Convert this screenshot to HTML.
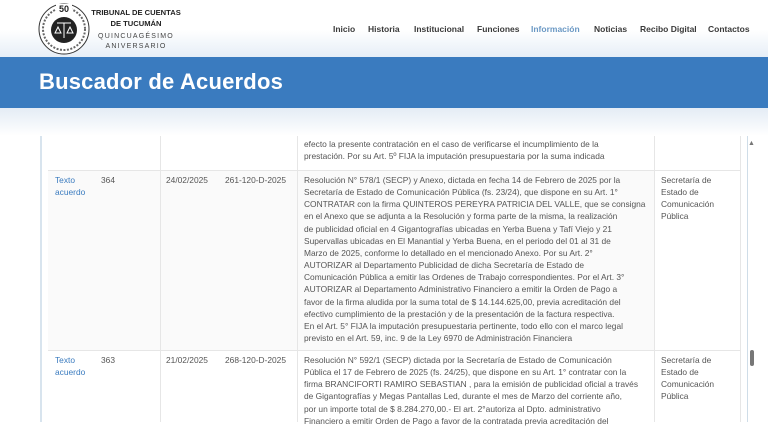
<!DOCTYPE html>
<html><head><meta charset="utf-8"><style>
*{margin:0;padding:0;box-sizing:border-box}
body{width:768px;height:422px;overflow:hidden;background:#fff;font-family:"Liberation Sans",sans-serif;position:relative}
.hdr{position:absolute;left:0;top:0;width:768px;height:57px;background:linear-gradient(#fff 0,#fff 30px,#e6eef7 57px)}
.nav{position:absolute;top:24px;font-size:8.5px;font-weight:bold;color:#3a3a3a;white-space:nowrap}
.band{position:absolute;left:0;top:57px;width:768px;height:51px;background:#3a7bbf}
.band h1{position:absolute;left:39px;top:12px;font-size:22px;font-weight:bold;color:#fff;letter-spacing:.2px}
.fade{position:absolute;left:0;top:108px;width:768px;height:28px;background:linear-gradient(#e4ecf5,#fff)}
.t{position:absolute;font-size:8.4px;line-height:12.15px;color:#555;white-space:nowrap}
.lk{color:#3a7bbf}
.vl{position:absolute;width:1px;background:#e6e6e6}
.hl{position:absolute;height:1px;background:#e6e6e6;left:48px;width:692px}
</style></head><body>
<div class="hdr"></div>
<svg style="position:absolute;left:38px;top:3px" width="52" height="52" viewBox="0 0 52 52">
<circle cx="26" cy="26" r="25" fill="#fff" stroke="#333" stroke-width="1"/>
<circle cx="26" cy="26" r="21" fill="none" stroke="#666" stroke-width="2" stroke-dasharray="2 1.5"/>
<circle cx="26" cy="27" r="13" fill="#222"/>
<path d="M19 20h14M26 20v15M20 24l-3 6h6zM32 24l-3 6h6z" stroke="#fff" stroke-width="1" fill="none"/>
<rect x="18" y="1" width="16" height="9" fill="#fff"/>
<text x="26" y="9" font-size="9" font-weight="bold" text-anchor="middle" font-family="Liberation Sans" fill="#222">50</text>
</svg>
<div style="position:absolute;left:86px;top:7px;width:100px;text-align:center;font-size:7.6px;font-weight:bold;color:#222;line-height:11px;white-space:nowrap">TRIBUNAL DE CUENTAS<br>DE TUCUMÁN</div>
<div style="position:absolute;left:86px;top:32px;width:100px;text-align:center;font-size:7px;color:#444;letter-spacing:1.2px;line-height:10px;white-space:nowrap">QUINCUAGÉSIMO<br>ANIVERSARIO</div>
<div class="nav" style="left:333px">Inicio</div>
<div class="nav" style="left:368px">Historia</div>
<div class="nav" style="left:414px">Institucional</div>
<div class="nav" style="left:477px">Funciones</div>
<div class="nav" style="left:531px;color:#6a98c4">Información</div>
<div class="nav" style="left:594px">Noticias</div>
<div class="nav" style="left:640px">Recibo Digital</div>
<div class="nav" style="left:708px">Contactos</div>
<div class="band"><h1>Buscador de Acuerdos</h1></div>
<div class="fade"></div>
<div style="position:absolute;left:40px;top:136px;width:2px;height:286px;background:#d8e4ee"></div>
<div style="position:absolute;left:48px;top:170px;width:606px;height:181px;background:#fafafa"></div>
<div class="vl" style="left:160px;top:136px;height:286px"></div>
<div class="vl" style="left:297px;top:136px;height:286px"></div>
<div class="vl" style="left:654px;top:136px;height:286px"></div>
<div class="vl" style="left:740px;top:136px;height:286px"></div>
<div class="hl" style="top:170px"></div>
<div class="hl" style="top:350px"></div>
<div style="position:absolute;left:747px;top:136px;width:1px;height:286px;background:#cfdde8"></div>
<div style="position:absolute;left:748px;top:140px;font-size:7px;color:#777">▲</div>
<div style="position:absolute;left:750px;top:350px;width:4px;height:16px;border-radius:2px;background:#777"></div>
<div class="t" style="left:304px;top:138px">efecto la presente contratación en el caso de verificarse el incumplimiento de la<br>prestación. Por su Art. 5º FIJA la imputación presupuestaria por la suma indicada</div>
<div class="t lk" style="left:55px;top:174px">Texto<br>acuerdo</div>
<div class="t" style="left:101px;top:174px">364</div>
<div class="t" style="left:166px;top:174px">24/02/2025</div>
<div class="t" style="left:225px;top:174px">261-120-D-2025</div>
<div class="t" style="left:304px;top:174px">Resolución N° 578/1 (SECP) y Anexo, dictada en fecha 14 de Febrero de 2025 por la<br>Secretaría de Estado de Comunicación Pública (fs. 23/24), que dispone en su Art. 1°<br>CONTRATAR con la firma QUINTEROS PEREYRA PATRICIA DEL VALLE, que se consigna<br>en el Anexo que se adjunta a la Resolución y forma parte de la misma, la realización<br>de publicidad oficial en 4 Gigantografías ubicadas en Yerba Buena y Tafí Viejo y 21<br>Supervallas ubicadas en El Manantial y Yerba Buena, en el periodo del 01 al 31 de<br>Marzo de 2025, conforme lo detallado en el mencionado Anexo. Por su Art. 2°<br>AUTORIZAR al Departamento Publicidad de dicha Secretaría de Estado de<br>Comunicación Pública a emitir las Ordenes de Trabajo correspondientes. Por el Art. 3°<br>AUTORIZAR al Departamento Administrativo Financiero a emitir la Orden de Pago a<br>favor de la firma aludida por la suma total de $ 14.144.625,00, previa acreditación del<br>efectivo cumplimiento de la prestación y de la presentación de la factura respectiva.<br>En el Art. 5° FIJA la imputación presupuestaria pertinente, todo ello con el marco legal<br>previsto en el Art. 59, inc. 9 de la Ley 6970 de Administración Financiera</div>
<div class="t" style="left:661px;top:174px">Secretaría de<br>Estado de<br>Comunicación<br>Pública</div>
<div class="t lk" style="left:55px;top:354px">Texto<br>acuerdo</div>
<div class="t" style="left:101px;top:354px">363</div>
<div class="t" style="left:166px;top:354px">21/02/2025</div>
<div class="t" style="left:225px;top:354px">268-120-D-2025</div>
<div class="t" style="left:304px;top:354px">Resolución N° 592/1 (SECP) dictada por la Secretaría de Estado de Comunicación<br>Pública el 17 de Febrero de 2025 (fs. 24/25), que dispone en su Art. 1° contratar con la<br>firma BRANCIFORTI RAMIRO SEBASTIAN , para la emisión de publicidad oficial a través<br>de Gigantografías y Megas Pantallas Led, durante el mes de Marzo del corriente año,<br>por un importe total de $ 8.284.270,00.- El art. 2°autoriza al Dpto. administrativo<br>Financiero a emitir Orden de Pago a favor de la contratada previa acreditación del</div>
<div class="t" style="left:661px;top:354px">Secretaría de<br>Estado de<br>Comunicación<br>Pública</div>
</body></html>
